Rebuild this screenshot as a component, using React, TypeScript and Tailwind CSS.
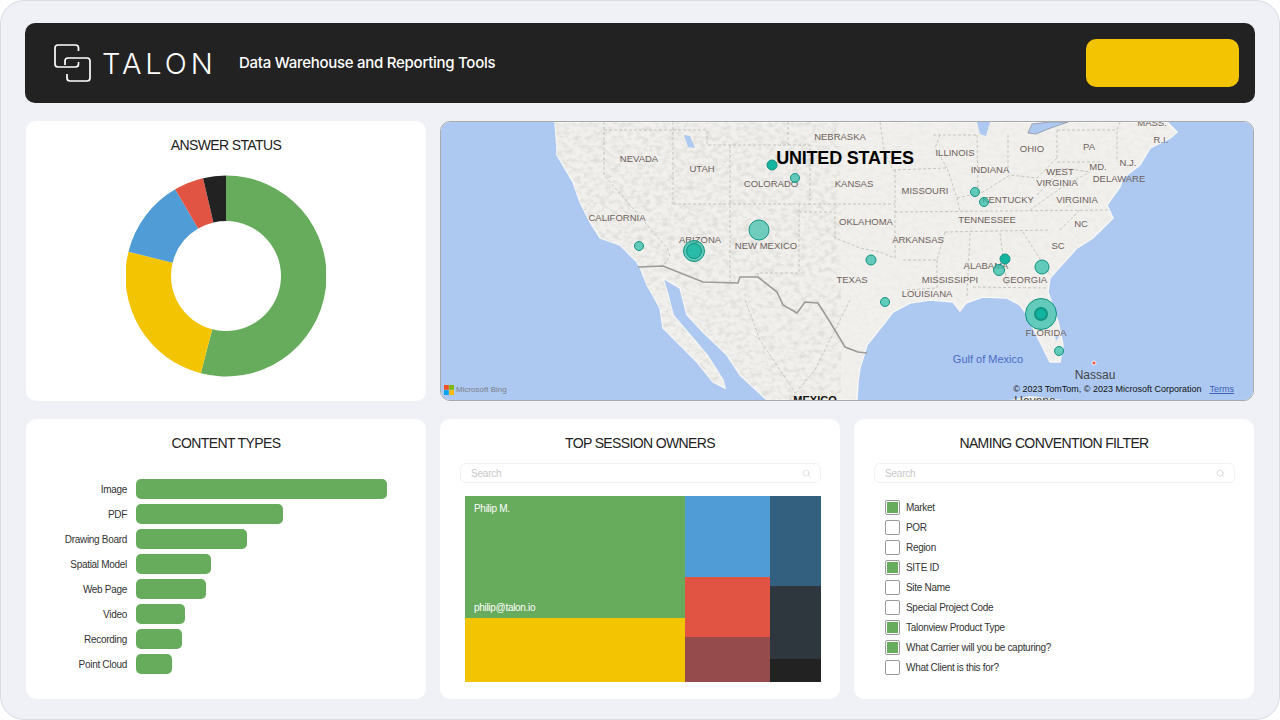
import { Search } from "lucide-react";

const donut = [
  { color: "#67ac5c", from: 0, to: 194.5 },
  { color: "#f2c402", from: 194.5, to: 284 },
  { color: "#4f9cd6", from: 284, to: 329.6 },
  { color: "#e15343", from: 329.6, to: 346.8 },
  { color: "#222222", from: 346.8, to: 360 },
];

const bars = [
  { label: "Image", width: 251 },
  { label: "PDF", width: 147 },
  { label: "Drawing Board", width: 111 },
  { label: "Spatial Model", width: 75 },
  { label: "Web Page", width: 70 },
  { label: "Video", width: 49 },
  { label: "Recording", width: 46 },
  { label: "Point Cloud", width: 36 },
];

const filters = [
  { label: "Market", on: true },
  { label: "POR", on: false },
  { label: "Region", on: false },
  { label: "SITE ID", on: true },
  { label: "Site Name", on: false },
  { label: "Special Project Code", on: false },
  { label: "Talonview Product Type", on: true },
  { label: "What Carrier will you be capturing?", on: true },
  { label: "What Client is this for?", on: false },
];

const stateLabels: [string, number, number][] = [
  ["NEBRASKA", 840, 136],
  ["NEVADA", 639, 158],
  ["UTAH", 702, 168],
  ["COLORADO", 771, 183],
  ["KANSAS", 854, 183],
  ["ILLINOIS", 955, 152],
  ["OHIO", 1032, 148],
  ["PA", 1089, 146],
  ["INDIANA", 990, 169],
  ["WEST", 1060, 171],
  ["VIRGINIA", 1057, 182],
  ["MD.", 1098, 166],
  ["N.J.", 1128, 162],
  ["DELAWARE", 1119, 178],
  ["MISSOURI", 925, 190],
  ["KENTUCKY", 1008, 199],
  ["VIRGINIA", 1077, 199],
  ["TENNESSEE", 987, 219],
  ["NC", 1081, 223],
  ["CALIFORNIA", 617, 217],
  ["ARIZONA", 700, 239],
  ["NEW MEXICO", 766, 245],
  ["OKLAHOMA", 866, 221],
  ["ARKANSAS", 918, 239],
  ["SC", 1058, 245],
  ["ALABAMA", 986, 265],
  ["TEXAS", 852, 279],
  ["MISSISSIPPI", 950, 279],
  ["GEORGIA", 1025, 279],
  ["LOUISIANA", 927, 293],
  ["FLORIDA", 1046, 332],
  ["MASS.", 1152, 122],
  ["R.I.", 1161, 139],
];

const soft = "rgba(44,188,168,0.72)";
const strong = "rgba(12,178,158,0.96)";

const bubbles: [number, number, number, string, number][] = [
  [772, 165, 5, strong, 1],
  [795, 178, 4.5, soft, 1],
  [759, 230, 10, "rgba(44,188,168,0.65)", 1],
  [639, 246, 4.5, soft, 1],
  [694, 251, 10.5, soft, 1],
  [694, 251, 7.5, "rgba(30,185,165,0.85)", 1],
  [1041, 314, 15.5, soft, 1],
  [1041, 314, 6, strong, 2],
  [975, 192, 4.5, soft, 1],
  [984, 202, 4.5, soft, 1],
  [871, 260, 5, soft, 1],
  [885, 302, 4.5, soft, 1],
  [1005, 259, 5, strong, 1],
  [999, 270, 5.5, soft, 1],
  [1042, 267, 7, soft, 1],
  [1059, 351, 4.5, soft, 1],
];

const stateLines = [
  "604,122 604,175 667,248 670,256 663,266",
  "604,130 673,130",
  "673,122 673,204",
  "673,130 707,130 707,145 810,145 810,204",
  "730,145 730,282",
  "673,204 895,204",
  "788,122 788,145",
  "799,204 799,273 758,273 758,277",
  "799,212 835,212 835,238 860,248 880,252 895,258",
  "893,170 947,168 957,198 960,212",
  "895,170 895,258",
  "895,212 1110,210",
  "945,232 1050,230",
  "903,260 937,260 945,232",
  "937,260 937,288 905,290",
  "970,233 967,297",
  "1000,233 1007,285",
  "973,287 1047,288",
  "1023,232 1050,275",
  "977,135 978,195",
  "1008,135 1008,172",
  "1057,130 1057,158",
  "1057,130 1117,130",
  "1057,162 1103,162",
  "957,198 983,192 1010,175 1037,178",
  "933,135 977,135",
  "940,135 935,148 947,168",
  "1037,178 1057,158",
  "1037,195 1063,168 1090,172",
  "1120,122 1117,130 1117,162",
  "880,122 884,150 893,170",
  "1030,210 1058,190 1075,180 1090,172",
  "1060,230 1080,210",
  "850,300 815,370 790,400",
  "745,300 760,340 800,400",
];

const landPath =
  "M555,122 L557,148 L557,155 L573,182 L580,202 L590,222 L600,238 L620,245 L637,262 L640,267 L647,285 L660,308 L663,328 L680,345 L697,362 L713,382 L725,388 L723,380 L707,355 L690,335 L673,315 L668,295 L663,278 L680,288 L687,315 L703,332 L727,355 L740,375 L767,400 L857,400 L858,382 L860,368 L867,345 L883,325 L893,312 L910,303 L930,300 L953,302 L960,311 L966,303 L983,297 L1007,298 L1020,305 L1027,315 L1030,322 L1040,342 L1050,362 L1060,362 L1063,345 L1058,322 L1048,292 L1050,278 L1077,248 L1093,238 L1113,218 L1107,205 L1120,187 L1123,178 L1140,165 L1150,148 L1170,138 L1177,132 L1167,122 Z";

// pie wedge as a ring segment, angles clockwise from the top
const ringPath = (from: number, to: number) => {
  const cx = 100;
  const cy = 101;
  const outer = 100.5;
  const inner = 55;
  const point = (r: number, a: number) => {
    const rad = ((a - 90) * Math.PI) / 180;
    return `${cx + r * Math.cos(rad)} ${cy + r * Math.sin(rad)}`;
  };
  const large = to - from > 180 ? 1 : 0;
  return `M${point(outer, from)} A${outer} ${outer} 0 ${large} 1 ${point(outer, to)} L${point(inner, to)} A${inner} ${inner} 0 ${large} 0 ${point(inner, from)} Z`;
};

const Title = ({ text }: { text: string }) => (
  <h2 className="text-center text-[14px] leading-[20px] tracking-[-0.045em] text-[#222222]">{text}</h2>
);

const SearchBox = () => (
  <div className="mr-[-1px] flex h-[20px] items-center justify-between rounded-[6px] border border-[#eff1f6] pl-[10px] pr-[9px]">
    <span className="text-[10px] tracking-[-0.02em] text-[#c8c8c8]">Search</span>
    <Search className="h-[9px] w-[9px] text-[#c8c8c8]" strokeWidth={1.5} />
  </div>
);

const UsMap = () => (
  <svg viewBox="441 122 812 278" className="block h-full w-full">
    <defs>
      <filter id="terrain" x="0" y="0" width="100%" height="100%">
        <feTurbulence type="fractalNoise" baseFrequency="0.16 0.22" numOctaves="3" seed="7" />
        <feColorMatrix values="0 0 0 0 0.42  0 0 0 0 0.42  0 0 0 0 0.4  1.7 0 0 0 -0.72" />
        <feComposite in2="SourceGraphic" operator="in" />
      </filter>
      <clipPath id="west">
        <rect x="541" y="122" width="300" height="278" />
      </clipPath>
    </defs>
    <rect x="441" y="122" width="812" height="278" fill="#aec9f1" />
    <path d={landPath} fill="#f1f0ec" stroke="#f7f7f5" strokeWidth="1.5" />
    <path d="M1010,400 L1030,396 L1063,400 Z" fill="#f1f0ec" />
    <path d={landPath} filter="url(#terrain)" opacity="0.1" />
    <g clipPath="url(#west)">
      <path d={landPath} filter="url(#terrain)" opacity="0.3" />
    </g>
    <path d="M977,122 L990,122 L986,136 L980,134 Z" fill="#aec9f1" />
    <path d="M1028,133 L1032,124 L1050,122 L1068,122 L1048,129 L1036,134 Z" fill="#aec9f1" stroke="#8a94a6" strokeWidth="0.8" />
    <path d="M684,135 L690,136 L695,148 L688,147 Z" fill="#aec9f1" />
    <path d="M1055,335 L1059,337 L1056,341 Z" fill="#aec9f1" />
    {stateLines.map((points) => (
      <polyline key={points} points={points} fill="none" stroke="#bdbbb4" strokeWidth="0.8" strokeDasharray="3 2" />
    ))}
    <polyline
      points="638,267 663,266 703,282 738,283 740,277 758,277 777,292 783,305 797,313 805,302 818,303 830,322 845,347 858,352 867,353"
      fill="none"
      stroke="#9b9b98"
      strokeWidth="1.6"
    />
    <g className="font-['Liberation_Sans',sans-serif]">
      {stateLabels.map(([label, x, y]) => (
        <text key={label + x} x={x} y={y + 3.5} textAnchor="middle" fontSize="9.5" fill="#6f5f5d">
          {label}
        </text>
      ))}
      <text x="988" y="363" textAnchor="middle" fontSize="11" fill="#4a6cc4">
        Gulf of Mexico
      </text>
      <text x="1095" y="379" textAnchor="middle" fontSize="12" fill="#444444">
        Nassau
      </text>
      <text x="1035" y="405" textAnchor="middle" fontSize="12" fill="#444444">
        Havana
      </text>
      <text x="815" y="404" textAnchor="middle" fontSize="11" fontWeight="700" fill="#111111">
        MEXICO
      </text>
      <text x="845" y="164" textAnchor="middle" fontSize="18" fontWeight="700" letterSpacing="-0.2" fill="#000000">
        UNITED STATES
      </text>
    </g>
    <circle cx="1094" cy="363" r="2" fill="#ee5a48" stroke="#ffffff" strokeWidth="0.8" />
    {bubbles.map(([cx, cy, r, fill, stroke]) => (
      <circle key={`${cx}-${cy}-${r}`} cx={cx} cy={cy} r={r} fill={fill} stroke="#129280" strokeWidth={stroke} />
    ))}
  </svg>
);

export default function App() {
  return (
    <div className="h-[720px] w-[1280px] bg-white font-['Liberation_Sans',sans-serif]">
      <div className="flex h-full flex-col gap-[18px] rounded-[24px] border border-[#d9dbe0] bg-[#eff1f6] px-[24px] pb-[20px] pt-[22px]">
        {/* Header */}
        <header className="flex h-[80px] shrink-0 items-center rounded-[10px] bg-[#222222] pl-[28px] pr-[16px] font-[Inter,sans-serif]">
          <svg viewBox="53 43 39 40" className="h-[40px] w-[39px]" fill="none" stroke="#ffffff" strokeWidth="1.7">
            <path d="M78.5 51 V48 a3 3 0 0 0 -3 -3 H58 a3 3 0 0 0 -3 3 V64 a3 3 0 0 0 3 3 H75.5 a3 3 0 0 0 3 -3 V62" />
            <path d="M65 65 V61 a3 3 0 0 1 3 -3 H87 a3 3 0 0 1 3 3 V78 a3 3 0 0 1 -3 3 H70 a3 3 0 0 1 -3 -3 V74" />
          </svg>
          <span className="ml-[10px] w-[112px] whitespace-nowrap text-[29px] font-light leading-none tracking-[0.135em] text-white">TALON</span>
          <span className="ml-[25px] text-[15px] font-medium tracking-[-0.018em] text-white">
            Data Warehouse and Reporting Tools
          </span>
          <div className="ml-auto h-[48px] w-[153px] rounded-[10px] bg-[#f2c402]" />
        </header>

        {/* Top row */}
        <div className="flex h-[280px] shrink-0 gap-[14px] px-px">
          <section className="flex w-[400px] flex-col items-center rounded-[10px] bg-white pt-[14px]">
            <Title text="ANSWER STATUS" />
            <svg viewBox="0 0 200 202" className="mt-[20px] h-[202px] w-[200px]">
              {donut.map((s) => (
                <path key={s.color} d={ringPath(s.from, s.to)} fill={s.color} />
              ))}
            </svg>
          </section>
          <section className="relative flex-1 overflow-hidden rounded-[10px] border border-[#a9a9a9]">
            <UsMap />
            <div className="absolute bottom-[5px] left-[3px] flex items-center gap-[2px]">
              <svg viewBox="0 0 10 10" className="h-[10px] w-[10px]">
                <rect width="4.8" height="4.8" fill="#f25022" />
                <rect x="5.2" width="4.8" height="4.8" fill="#7fba00" />
                <rect y="5.2" width="4.8" height="4.8" fill="#00a4ef" />
                <rect x="5.2" y="5.2" width="4.8" height="4.8" fill="#ffb900" />
              </svg>
              <span className="text-[8px] leading-none text-[#7a7f88]">Microsoft Bing</span>
            </div>
            <div className="absolute bottom-[6px] right-[19px] flex gap-[8px] text-[9px] leading-none">
              <span className="text-[#111111]">© 2023 TomTom, © 2023 Microsoft Corporation</span>
              <span className="text-[#3a62b8] underline">Terms</span>
            </div>
          </section>
        </div>

        {/* Bottom row */}
        <div className="flex h-[280px] shrink-0 gap-[14px] px-px">
          <section className="w-[400px] rounded-[10px] bg-white pt-[14px]">
            <Title text="CONTENT TYPES" />
            <div className="mt-[26px] flex flex-col gap-[5px]">
              {bars.map((b) => (
                <div key={b.label} className="flex h-[20px] items-center">
                  <span className="w-[101px] text-right text-[10px] tracking-[-0.03em] text-[#333333]">{b.label}</span>
                  <div className="ml-[9px] h-[20px] rounded-[5px] bg-[#67ac5c]" style={{ width: b.width }} />
                </div>
              ))}
            </div>
          </section>

          <section className="w-[400px] rounded-[10px] bg-white px-[20px] pt-[14px]">
            <Title text="TOP SESSION OWNERS" />
            <div className="mt-[10px]">
              <SearchBox />
            </div>
            <div className="ml-[5px] mr-[-1px] mt-[13px] flex h-[186px]">
              <div className="flex w-[220px] flex-col">
                <div className="flex h-[122px] flex-col justify-between bg-[#67ac5c] px-[9px] pb-[4px] pt-[7px] text-[10px] leading-[12px] tracking-[-0.03em] text-white">
                  <span>Philip M.</span>
                  <span>philip@talon.io</span>
                </div>
                <div className="flex-1 bg-[#f2c402]" />
              </div>
              <div className="flex w-[85px] flex-col">
                <div className="h-[81px] bg-[#4f9cd6]" />
                <div className="h-[60px] bg-[#e15343]" />
                <div className="flex-1 bg-[#954a4b]" />
              </div>
              <div className="flex w-[51px] flex-col">
                <div className="h-[90px] bg-[#33607f]" />
                <div className="h-[73px] bg-[#2e363e]" />
                <div className="flex-1 bg-[#222222]" />
              </div>
            </div>
          </section>

          <section className="w-[400px] rounded-[10px] bg-white px-[20px] pt-[14px]">
            <Title text="NAMING CONVENTION FILTER" />
            <div className="mt-[10px]">
              <SearchBox />
            </div>
            <ul className="ml-[11px] mt-[17px] flex flex-col gap-[5px]">
              {filters.map((f) => (
                <li key={f.label} className="flex h-[15px] items-center gap-[6px]">
                  <span className="flex h-[15px] w-[15px] items-center justify-center rounded-[2px] border border-[#9a9a9a]">
                    {f.on && <span className="h-[11px] w-[11px] bg-[#67ac5c]" />}
                  </span>
                  <span className="text-[10px] tracking-[-0.03em] text-[#333333]">{f.label}</span>
                </li>
              ))}
            </ul>
          </section>
        </div>
      </div>
    </div>
  );
}
